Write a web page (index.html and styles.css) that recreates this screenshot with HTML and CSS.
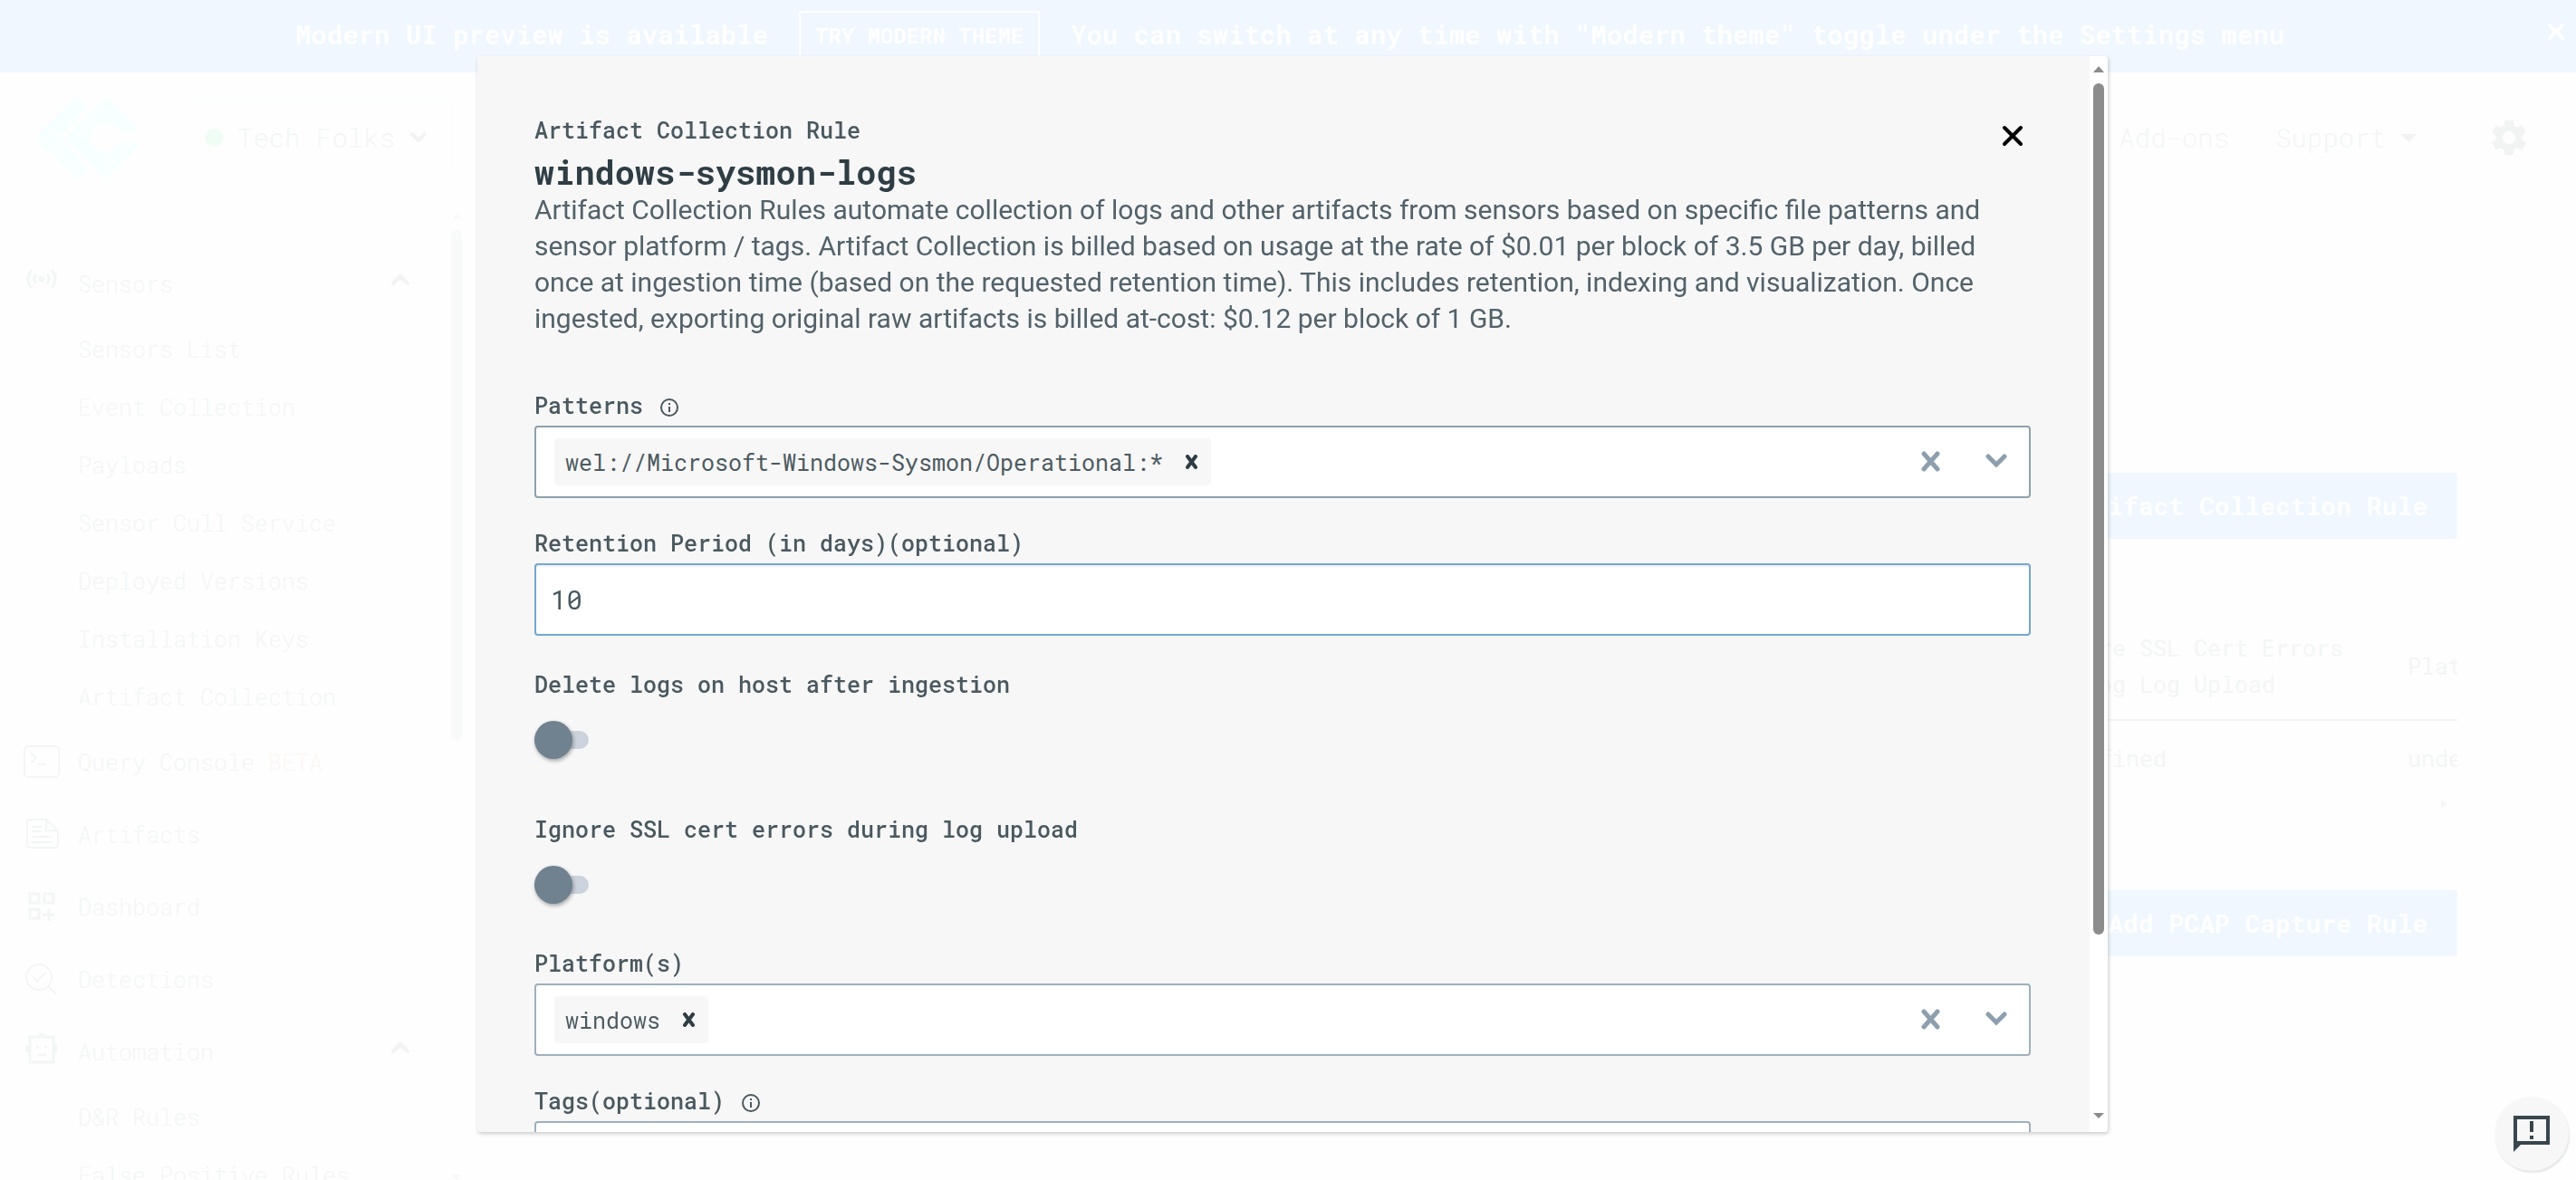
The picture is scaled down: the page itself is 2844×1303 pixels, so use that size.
FILE: index.html
```html
<!DOCTYPE html>
<html lang="en">
<head>
<meta charset="utf-8">
<meta name="viewport" content="width=device-width, initial-scale=1">
<title>Artifact Collection Rule</title>
<link rel="stylesheet" href="styles.css">
</head>
<body>
<div class="page">
  <div class="banner">
    <div class="banner-content">
      <span>Modern UI preview is available</span>
      <button class="banner-try" type="button">TRY MODERN THEME</button>
      <span>You can switch at any time with "Modern theme" toggle under the Settings menu</span>
    </div>
    <button class="banner-close" type="button" aria-label="Dismiss">
      <svg width="20" height="20" viewBox="0 0 20 20"><path d="M3 3l14 14M17 3L3 17" fill="none" stroke="currentColor" stroke-width="4" stroke-linecap="round"/></svg>
    </button>
  </div>

  <header class="topbar">
    <svg class="logo" width="116" height="90" viewBox="0 0 116 90"><g fill="currentColor" stroke="currentColor" stroke-width="4" stroke-linejoin="round"><path d="M46 2L55 11 25 45 55 79 46 88 2 45Z"/><path d="M78 2L112 36H93A18 18 0 1 0 93 53H112L78 88 35 45Z"/></g></svg>
    <button class="org" type="button">
      <span class="org-dot"></span>Tech Folks
      <svg width="20" height="14" viewBox="0 0 20 14"><path d="M2 2l8 8 8-8" fill="none" stroke="currentColor" stroke-width="4"/></svg>
    </button>
    <nav class="topnav">
      <a href="#">Add-ons</a>
      <a href="#">Support <svg width="18" height="9" viewBox="0 0 18 9"><path d="M0 0h18L9 9z" fill="currentColor"/></svg></a>
      <a class="gear" href="#" aria-label="Settings"><svg width="48" height="48" viewBox="0 0 24 24"><path fill="currentColor" d="M19.14 12.94c.04-.3.06-.61.06-.94s-.02-.64-.07-.94l2.03-1.58a.49.49 0 0 0 .12-.61l-1.92-3.32a.49.49 0 0 0-.59-.22l-2.39.96a7 7 0 0 0-1.62-.94l-.36-2.54a.48.48 0 0 0-.48-.41h-3.84a.47.47 0 0 0-.47.41l-.36 2.54c-.59.24-1.13.57-1.62.94l-2.39-.96a.48.48 0 0 0-.59.22L2.74 8.87a.47.47 0 0 0 .12.61l2.03 1.58c-.05.3-.09.63-.09.94s.02.64.07.94l-2.03 1.58a.49.49 0 0 0-.12.61l1.92 3.32c.12.22.37.29.59.22l2.39-.96c.5.38 1.03.7 1.62.94l.36 2.54c.05.24.24.41.48.41h3.84c.24 0 .44-.17.47-.41l.36-2.54a7 7 0 0 0 1.62-.94l2.39.96c.22.08.47 0 .59-.22l1.92-3.32a.47.47 0 0 0-.12-.61zM12 15.6a3.6 3.6 0 1 1 0-7.2 3.6 3.6 0 0 1 0 7.2z"/></svg></a>
    </nav>
  </header>

  <div class="columns">
    <aside class="sidebar">
      <nav class="menu">
        <a class="item" href="#"><svg class="ico" viewBox="0 0 40 40" fill="none" stroke="currentColor" stroke-width="3"><circle cx="20" cy="15" r="2" fill="currentColor"/><path d="M9 5q-8 10 0 20M14 10q-4 5 0 10M26 10q4 5 0 10M31 5q8 10 0 20"/></svg>Sensors<svg class="caret" viewBox="0 0 22 14"><path d="M2 12l9-9 9 9" fill="none" stroke="currentColor" stroke-width="4"/></svg></a>
        <a class="sub" href="#">Sensors List</a>
        <a class="sub" href="#">Event Collection</a>
        <a class="sub" href="#">Payloads</a>
        <a class="sub" href="#">Sensor Cull Service</a>
        <a class="sub" href="#">Deployed Versions</a>
        <a class="sub" href="#">Installation Keys</a>
        <a class="sub" href="#">Artifact Collection</a>
        <a class="item" href="#"><svg class="ico" viewBox="0 0 40 40" fill="none" stroke="currentColor" stroke-width="2"><rect x="1" y="3" width="38" height="34" rx="4"/><path d="M8 10l6 6-6 6M16 23h9"/></svg>Query Console <span class="beta">BETA</span></a>
        <a class="item" href="#"><svg class="ico" viewBox="0 0 40 40" fill="none" stroke="currentColor" stroke-width="2"><path d="M7 4h18l13 12v16a3 3 0 0 1-3 3H7a3 3 0 0 1-3-3V7a3 3 0 0 1 3-3zM25 4v12h13M9 12h11M9 17h11M9 23h22M9 29h22"/></svg>Artifacts</a>
        <a class="item" href="#"><svg class="ico" viewBox="0 0 40 40" fill="none" stroke="currentColor" stroke-width="3"><path d="M7 6h10v10H7zM23 6h10v10H23zM7 23h10v10H7zM28 22v14M21 29h14"/></svg>Dashboard</a>
        <a class="item" href="#"><svg class="ico" viewBox="0 0 40 40" fill="none" stroke="currentColor" stroke-width="2"><circle cx="17" cy="18" r="14"/><path d="M27 28l9 9M11 18l4 5 9-10"/></svg>Detections</a>
        <a class="item" href="#"><svg class="ico" viewBox="0 0 40 40" fill="none" stroke="currentColor" stroke-width="3"><path d="M7 4h26v28H7zM15 24h10M4 13v8M36 13v8M17 1h6M14 15h3M23 15h3"/></svg>Automation<svg class="caret" viewBox="0 0 22 14"><path d="M2 12l9-9 9 9" fill="none" stroke="currentColor" stroke-width="4"/></svg></a>
        <a class="sub" href="#">D&amp;R Rules</a>
        <a class="sub" href="#">False Positive Rules</a>
      </nav>
      <div class="side-scroll">
        <svg width="10" height="6" viewBox="0 0 10 6"><path d="M0 6l5-6 5 6z" fill="currentColor"/></svg>
        <span class="side-thumb"></span>
        <svg width="10" height="6" viewBox="0 0 10 6"><path d="M0 0l5 6 5-6z" fill="currentColor"/></svg>
      </div>
    </aside>

    <main class="main">
      <section class="block">
        <button class="add" type="button">Add Artifact Collection Rule</button>
        <div class="table-wrap">
          <table class="rules">
            <thead><tr><th>Ignore SSL Cert Errors<br>During Log Upload</th><th>Platforms</th></tr></thead>
            <tbody><tr><td>undefined</td><td>undefined</td></tr></tbody>
          </table>
        </div>
        <div class="table-scroll"><svg width="6" height="10" viewBox="0 0 6 10"><path d="M0 0l6 5-6 5z" fill="currentColor"/></svg></div>
      </section>
      <section class="block block-pcap">
        <button class="add" type="button">Add PCAP Capture Rule</button>
      </section>
    </main>
  </div>
</div>

<div class="overlay">
  <div class="modal" role="dialog" aria-modal="true" aria-labelledby="rule-name">
    <form class="modal-body">
      <div class="modal-head">
        <div class="modal-intro">
          <p class="eyebrow">Artifact Collection Rule</p>
          <h1 class="title" id="rule-name">windows-sysmon-logs</h1>
          <p class="desc">Artifact Collection Rules automate collection of logs and other artifacts from sensors based on specific file patterns and sensor platform / tags. Artifact Collection is billed based on usage at the rate of $0.01 per block of 3.5 GB per day, billed once at ingestion time (based on the requested retention time). This includes retention, indexing and visualization. Once ingested, exporting original raw artifacts is billed at-cost: $0.12 per block of 1 GB.</p>
        </div>
        <button class="close" type="button" aria-label="Close"><svg width="24" height="26" viewBox="0 0 24 26"><path d="M3 4l18 18M21 4L3 22" fill="none" stroke="currentColor" stroke-width="4" stroke-linecap="round"/></svg></button>
      </div>

      <div class="field">
        <label class="label" for="patterns">Patterns <svg class="info" viewBox="0 0 22 22"><circle cx="11" cy="11" r="9" fill="none" stroke="currentColor" stroke-width="2"/><path d="M11 10v6M11 6v2" stroke="currentColor" stroke-width="2"/></svg></label>
        <div class="box box-dark">
          <span class="chip">wel://Microsoft-Windows-Sysmon/Operational:*<button class="chip-x" type="button" aria-label="Remove"><svg width="16" height="16" viewBox="0 0 16 16"><path d="M4 2l9 12M13 2L4 14" fill="none" stroke="currentColor" stroke-width="4" stroke-linecap="round"/></svg></button></span>
          <input class="combo" id="patterns" type="text">
          <button class="tool" type="button" aria-label="Clear"><svg width="24" height="24" viewBox="0 0 24 24"><path d="M4 3l15 17M19 3L4 20" fill="none" stroke="currentColor" stroke-width="5" stroke-linecap="round"/></svg></button>
          <button class="tool" type="button" aria-label="Open"><svg width="24" height="24" viewBox="0 0 24 24"><path d="M3 6l9 9 9-9" fill="none" stroke="currentColor" stroke-width="5" stroke-linecap="round"/></svg></button>
        </div>
      </div>

      <div class="field">
        <label class="label" for="retention">Retention Period (in days)(optional)</label>
        <input class="box box-focus text" id="retention" type="text" value="10">
      </div>

      <div class="toggles">
        <div class="toggle-field">
          <label class="label" for="delete-logs">Delete logs on host after ingestion</label>
          <input class="switch" id="delete-logs" type="checkbox" role="switch">
        </div>
        <div class="toggle-field">
          <label class="label" for="ignore-ssl">Ignore SSL cert errors during log upload</label>
          <input class="switch" id="ignore-ssl" type="checkbox" role="switch">
        </div>
      </div>

      <div class="field">
        <label class="label" for="platforms">Platform(s)</label>
        <div class="box">
          <span class="chip">windows<button class="chip-x" type="button" aria-label="Remove"><svg width="16" height="16" viewBox="0 0 16 16"><path d="M4 2l9 12M13 2L4 14" fill="none" stroke="currentColor" stroke-width="4" stroke-linecap="round"/></svg></button></span>
          <input class="combo" id="platforms" type="text">
          <button class="tool" type="button" aria-label="Clear"><svg width="24" height="24" viewBox="0 0 24 24"><path d="M4 3l15 17M19 3L4 20" fill="none" stroke="currentColor" stroke-width="5" stroke-linecap="round"/></svg></button>
          <button class="tool" type="button" aria-label="Open"><svg width="24" height="24" viewBox="0 0 24 24"><path d="M3 6l9 9 9-9" fill="none" stroke="currentColor" stroke-width="5" stroke-linecap="round"/></svg></button>
        </div>
      </div>

      <div class="field">
        <label class="label" for="tags">Tags(optional) <svg class="info" viewBox="0 0 22 22"><circle cx="11" cy="11" r="9" fill="none" stroke="currentColor" stroke-width="2"/><path d="M11 10v6M11 6v2" stroke="currentColor" stroke-width="2"/></svg></label>
        <div class="box"><input class="combo" id="tags" type="text"></div>
      </div>
    </form>
    <div class="scrollbar">
      <svg width="12" height="7" viewBox="0 0 12 7"><path d="M0 7l6-7 6 7z" fill="currentColor"/></svg>
      <div class="scroll-track"><div class="scroll-thumb"></div></div>
      <svg width="12" height="7" viewBox="0 0 12 7"><path d="M0 0l6 6 6-6z" fill="currentColor"/></svg>
    </div>
  </div>
</div>

<button class="feedback" type="button" aria-label="Send feedback"><svg width="48" height="48" viewBox="0 0 24 24"><path fill="currentColor" d="M22 2H2v20l4-4h16zm-2 14H4V4h16zM11 5h2v6h-2zm0 8h2v2h-2z"/></svg></button>
</body>
</html>
```
FILE: styles.css
```css
* { box-sizing: border-box; }

body {
  margin: 0;
  height: 100vh;
  overflow: hidden;
  background: #fefefe;
  color: #f3f6f6;
  font-family: "Roboto Mono", "DejaVu Sans Mono", monospace;
  font-size: 25px;
}

button, input { font: inherit; color: inherit; }
button { padding: 0; border: 0; background: none; }
a { color: inherit; text-decoration: none; }
p, h1 { margin: 0; }
svg { display: block; flex: none; }

.page { height: 100vh; overflow: hidden; display: flex; flex-direction: column; }

/* Banner */
.banner {
  flex: none;
  height: 80px;
  display: flex;
  align-items: flex-start;
  background: #f0f7ff;
  color: #fff;
  font-size: 29px;
  font-weight: 700;
  white-space: nowrap;
}
.banner-content { flex: 1; display: flex; justify-content: center; gap: 34px; line-height: 52px; padding: 12px 0 0 48px; }
.banner-try { width: 266px; height: 54px; border: 2px solid #fff; font-size: 24px; line-height: 46px; }
.banner-close { padding: 25px 12px 0; }

/* Header */
.topbar {
  flex: none;
  height: 150px;
  display: flex;
  align-items: flex-start;
  padding: 27px 50px 0 39px;
  font-size: 29px;
  font-weight: 300;
}
.logo { color: #f7ffff; }
.org {
  display: flex;
  align-items: center;
  gap: 16px;
  height: 84px;
  width: 291px;
  margin: 3px 0 0 54px;
  padding: 0 15px;
  border: 2px solid #fafffe;
  white-space: nowrap;
}
.org-dot { width: 20px; height: 20px; border-radius: 50%; background: #f0fdf5; }
.org svg { color: #f2f2f2; }
.topnav { flex: 1; display: flex; justify-content: flex-end; align-items: center; height: 90px; gap: 51px; }
.topnav a { display: flex; align-items: center; gap: 16px; }
.topnav svg { color: #f1f4f2; }
.topnav .gear { margin-left: 27px; }

.columns { flex: 1; min-height: 0; display: flex; }

/* Sidebar */
.sidebar {
  flex: none;
  width: 527px;
  display: flex;
  overflow: hidden;
  font-weight: 300;
}
.menu { flex: 1; padding: 43px 44px 0 26px; }
.item { display: flex; align-items: center; height: 80px; white-space: pre; }
.sub { display: flex; align-items: center; height: 64px; padding-left: 60px; }
.ico { width: 40px; height: 40px; margin-right: 20px; }
.caret { width: 22px; height: 14px; margin: 0 1px 8px auto; color: #f2f3f3; }
.beta { color: #fdf7f2; }
.side-scroll { width: 12px; margin-right: 17px; padding-top: 6px; display: flex; flex-direction: column; align-items: center; gap: 12px; color: #f7f9f8; }
.side-thumb { width: 12px; height: 564px; margin-bottom: auto; border-radius: 6px; background: #f8faf9; }

/* Page content */
.main { flex: 1; min-width: 0; padding: 258px 131px 0 0; }
.block { display: flex; flex-direction: column; align-items: flex-end; border-top: 2px solid #fbfffe; padding-top: 32px; }
.block-pcap { padding-top: 50px; }
.add { height: 73px; padding: 0 33px; border-radius: 4px; background: #f0f7ff; color: #fff; font-size: 28px; font-weight: 700; }
.table-wrap { width: 456px; margin-top: 91px; overflow: hidden; }
.rules { width: 600px; border-collapse: collapse; table-layout: fixed; line-height: 40px; }
.rules th { padding: 10px 0 18px; border-bottom: 2px solid #f3f4f4; text-align: left; font-weight: 400; white-space: nowrap; }
.rules th:first-child { width: 401px; }
.rules td { padding: 22px 0; }
.table-scroll { height: 51px; padding: 3px 12px 0; color: #f5f6f6; }

/* Dialog */
.overlay { position: fixed; inset: 0; display: flex; justify-content: center; padding: 62px 0 53px 10px; }
.modal {
  display: flex;
  width: 100%;
  max-width: 1800px;
  overflow: hidden;
  border-radius: 4px;
  background: #f7f7f7;
  box-shadow: 1px 2px 4px rgba(0, 0, 0, 0.2);
  color: #4a585f;
}
.modal-body { flex: 1; min-width: 0; padding: 61px 65px 0 63px; overflow: hidden; }
.modal-head { display: flex; align-items: flex-start; justify-content: space-between; margin-bottom: 56px; }
.modal-intro { flex: 1; max-width: 1610px; }
.eyebrow { margin-bottom: 3px; font-weight: 500; line-height: 42px; }
.title { color: #2f3d44; font-size: 37px; font-weight: 700; line-height: 44px; }
.desc { font-family: Roboto, sans-serif; font-size: 30px; line-height: 40px; color: #53626a; }
.close { margin: 14px 8px 0 0; color: #000; }

.field { margin-bottom: 30px; }
.label { display: flex; align-items: center; gap: 18px; line-height: 40px; margin-bottom: 2px; font-weight: 500; }
.info { width: 22px; height: 22px; margin-top: 4px; }
.box {
  display: flex;
  align-items: center;
  width: 100%;
  height: 80px;
  padding: 0 12px 0 20px;
  border: 2px solid #9fb0bc;
  border-radius: 4px;
  background: #fff;
}
.box-dark { border-color: #8ea0ad; }
.box-focus { border-color: #73a7d1; box-shadow: inset 0 2px 2px rgba(0, 0, 0, 0.06); }
.text { padding-left: 16px; font-size: 29px; outline: 0; }
.chip { display: flex; align-items: center; gap: 23px; height: 52px; padding: 0 14px 0 12px; border-radius: 4px; background: #f7f7f7; color: #4d5a61; }
.chip-x { color: #2f3d44; }
.combo { flex: 1; min-width: 0; border: 0; outline: 0; background: none; }
.tool { width: 72px; height: 72px; display: flex; align-items: center; justify-content: center; color: #8d9fae; }
.tool:last-child { width: 48px; margin-left: 12px; }

.toggles { display: flex; flex-direction: column; gap: 59px; padding: 4px 0 17px; margin-bottom: 30px; }
.toggles .label { margin-bottom: 31px; }
.switch {
  appearance: none;
  display: flex;
  align-items: center;
  width: 60px;
  height: 20px;
  margin: 0 0 10px;
  border-radius: 10px;
  background: #ccd3dc;
}
.switch::before { content: ""; flex: none; width: 42px; height: 42px; border-radius: 50%; background: #708290; box-shadow: 1px 2px 4px rgba(0, 0, 0, 0.35); }

.scrollbar { width: 20px; padding: 11px 0 14px; display: flex; flex-direction: column; align-items: center; background: #fff; color: #8c8c8c; }
.scroll-track { flex: 1; width: 12px; padding: 12px 0; }
.scroll-thumb { height: calc(84% - 5px); border-radius: 6px; background: #8c8c8c; }

/* Feedback launcher */
.feedback {
  position: fixed;
  right: 8px;
  bottom: 10px;
  display: flex;
  align-items: center;
  justify-content: center;
  width: 82px;
  height: 82px;
  border-radius: 50%;
  background: #f7f7f7;
  box-shadow: 1px 2px 2px rgba(60, 90, 80, 0.15);
  color: #3a464d;
}
```
